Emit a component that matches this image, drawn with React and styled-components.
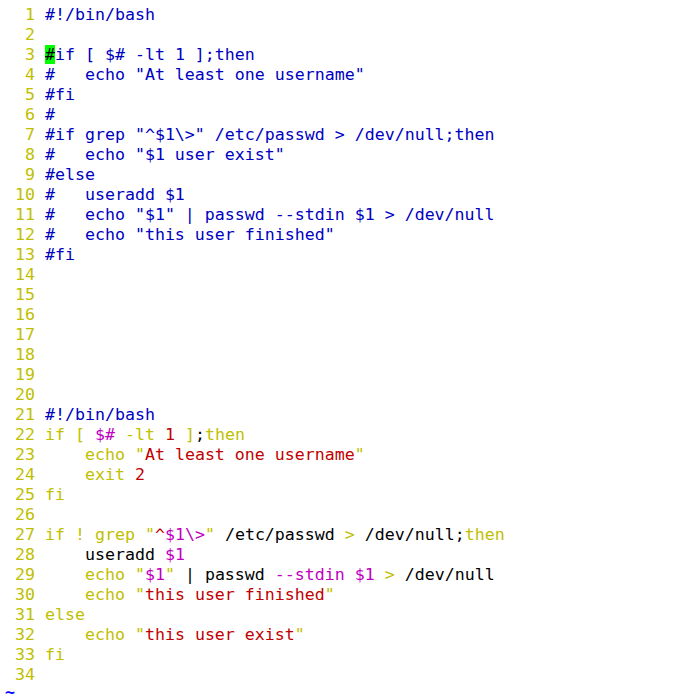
import React from "react";
import styled, { createGlobalStyle } from "styled-components";

const Global = createGlobalStyle`
  html, body { margin: 0; padding: 0; background: #ffffff; }
  body { overflow: hidden; }
`;

const Editor = styled.div`
  width: 686px;
  height: 698px;
  overflow: hidden;
  background: #ffffff;
  padding: 5px 0 0 5px;
  box-sizing: border-box;
  font-family: "DejaVu Sans Mono", monospace;
  font-size: 16.6px;
  line-height: 20px;
  color: #000000;
`;

const Row = styled.div`
  display: flex;
  height: 20px;
  white-space: pre;
`;

const LineNo = styled.span`
  width: 40px;
  flex: none;
  color: #c0c000;
`;

const Code = styled.span`
  white-space: pre;
`;

const colors = {
  c: "#0000c0",
  k: "#c0c000",
  s: "#c00000",
  m: "#c000c0",
  n: "#000000",
};

const Tok = styled.span`
  color: ${(p) => colors[p.$t]};
`;

const Cursor = styled.span`
  background: #00ff00;
  color: #000000;
`;

const Tilde = styled.div`
  height: 13px;
  line-height: 14px;
  margin-top: 1px;
  color: #0000ff;
  font-weight: bold;
`;

const lines = [
  [["c", "#!/bin/bash"]],
  [],
  [["cursor", "#"], ["c", "if [ $# -lt 1 ];then"]],
  [["c", "#   echo \"At least one username\""]],
  [["c", "#fi"]],
  [["c", "#"]],
  [["c", "#if grep \"^$1\\>\" /etc/passwd > /dev/null;then"]],
  [["c", "#   echo \"$1 user exist\""]],
  [["c", "#else"]],
  [["c", "#   useradd $1"]],
  [["c", "#   echo \"$1\" | passwd --stdin $1 > /dev/null"]],
  [["c", "#   echo \"this user finished\""]],
  [["c", "#fi"]],
  [], [], [], [], [], [], [],
  [["c", "#!/bin/bash"]],
  [["k", "if"], ["n", " "], ["k", "["], ["n", " "], ["m", "$#"], ["n", " "], ["k", "-lt"], ["n", " "], ["s", "1"], ["n", " "], ["k", "]"], ["n", ";"], ["k", "then"]],
  [["n", "    "], ["k", "echo"], ["n", " "], ["k", "\""], ["s", "At least one username"], ["k", "\""]],
  [["n", "    "], ["k", "exit"], ["n", " "], ["s", "2"]],
  [["k", "fi"]],
  [],
  [["k", "if"], ["n", " "], ["k", "!"], ["n", " "], ["k", "grep"], ["n", " "], ["k", "\""], ["s", "^"], ["m", "$1\\>"], ["k", "\""], ["n", " /etc/passwd "], ["k", ">"], ["n", " /dev/null;"], ["k", "then"]],
  [["n", "    useradd "], ["m", "$1"]],
  [["n", "    "], ["k", "echo"], ["n", " "], ["k", "\""], ["m", "$1"], ["k", "\""], ["n", " | passwd "], ["m", "--stdin"], ["n", " "], ["m", "$1"], ["n", " "], ["k", ">"], ["n", " /dev/null"]],
  [["n", "    "], ["k", "echo"], ["n", " "], ["k", "\""], ["s", "this user finished"], ["k", "\""]],
  [["k", "else"]],
  [["n", "    "], ["k", "echo"], ["n", " "], ["k", "\""], ["s", "this user exist"], ["k", "\""]],
  [["k", "fi"]],
  [],
];

export default function App() {
  return (
    <>
      <Global />
      <Editor>
        {lines.map((toks, i) => (
          <Row key={i}>
            <LineNo>{String(i + 1).padStart(3, " ")}</LineNo>
            <Code>
              {toks.map(([t, text], j) =>
                t === "cursor" ? (
                  <Cursor key={j}>{text}</Cursor>
                ) : (
                  <Tok key={j} $t={t}>
                    {text}
                  </Tok>
                )
              )}
            </Code>
          </Row>
        ))}
        <Tilde>~</Tilde>
      </Editor>
    </>
  );
}
